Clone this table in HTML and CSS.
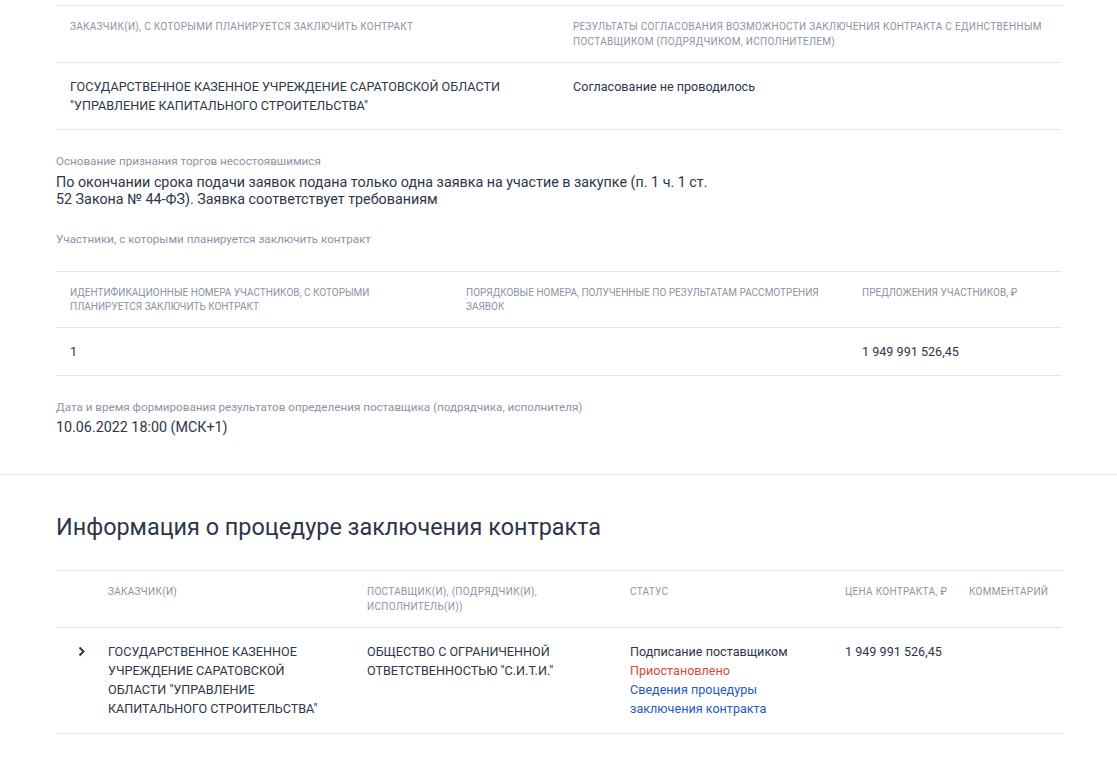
FILE: index.html
```html
<!DOCTYPE html>
<html lang="ru">
  <head>
    <meta charset="UTF-8" />
    <meta name="viewport" content="width=device-width, initial-scale=1.0" />
    <title>Информация о закупке</title>
    <link rel="stylesheet" href="styles.css">
  </head>
  <body>
    <div class="block">
      <div class="table t-two">
        <div class="row head">
          <div class="cell">Заказчик(и), с которыми планируется заключить контракт</div>
          <div class="cell">Результаты согласования возможности заключения контракта с единственным поставщиком (подрядчиком, исполнителем)</div>
        </div>
        <div class="row body">
          <div class="cell">ГОСУДАРСТВЕННОЕ КАЗЕННОЕ УЧРЕЖДЕНИЕ САРАТОВСКОЙ ОБЛАСТИ "УПРАВЛЕНИЕ КАПИТАЛЬНОГО СТРОИТЕЛЬСТВА"</div>
          <div class="cell">Согласование не проводилось</div>
        </div>
      </div>

      <div class="field">
        <div class="label">Основание признания торгов несостоявшимися</div>
        <div class="value wide">По окончании срока подачи заявок подана только одна заявка на участие в закупке (п. 1 ч. 1 ст. 52 Закона № 44-ФЗ). Заявка соответствует требованиям</div>
      </div>

      <div class="field before-table">
        <div class="label">Участники, с которыми планируется заключить контракт</div>
      </div>

      <div class="table t-three">
        <div class="row head">
          <div class="cell">Идентификационные номера участников, с которыми планируется заключить контракт</div>
          <div class="cell">Порядковые номера, полученные по результатам рассмотрения заявок</div>
          <div class="cell">Предложения участников, ₽</div>
        </div>
        <div class="row body">
          <div class="cell">1</div>
          <div class="cell"></div>
          <div class="cell">1 949 991 526,45</div>
        </div>
      </div>

      <div class="field date">
        <div class="label">Дата и время формирования результатов определения поставщика (подрядчика, исполнителя)</div>
        <div class="value">10.06.2022 18:00 (МСК+1)</div>
      </div>
    </div>

    <div class="block second">
      <h2>Информация о процедуре заключения контракта</h2>
      <div class="table t-contract">
        <div class="row head">
          <div class="cell"></div>
          <div class="cell">Заказчик(и)</div>
          <div class="cell">Поставщик(и), (подрядчик(и), исполнитель(и))</div>
          <div class="cell">Статус</div>
          <div class="cell price">Цена контракта, ₽</div>
          <div class="cell">Комментарий</div>
        </div>
        <div class="row body">
          <div class="cell toggle">
            <svg width="8" height="11" viewBox="0 0 8 11"><path d="M1.5 1.5 L5.5 5.5 L1.5 9.5" fill="none" stroke="#2d3648" stroke-width="2"/></svg>
          </div>
          <div class="cell">ГОСУДАРСТВЕННОЕ КАЗЕННОЕ УЧРЕЖДЕНИЕ САРАТОВСКОЙ ОБЛАСТИ "УПРАВЛЕНИЕ КАПИТАЛЬНОГО СТРОИТЕЛЬСТВА"</div>
          <div class="cell">ОБЩЕСТВО С ОГРАНИЧЕННОЙ ОТВЕТСТВЕННОСТЬЮ "С.И.Т.И."</div>
          <div class="cell">
            <div>Подписание поставщиком</div>
            <div class="status-red">Приостановлено</div>
            <a class="link" href="#">Сведения процедуры заключения контракта</a>
          </div>
          <div class="cell price">1 949 991 526,45</div>
          <div class="cell"></div>
        </div>
      </div>
    </div>
  </body>
</html>
```

FILE: styles.css
```css
body {
  font-family: Roboto, "Noto Sans", Arial, sans-serif;
  color: #2d3648;
  background-color: #fff;
  margin: 0;
  padding: 0;
}

.block {
  padding: 5px 55px 0 56px;
}

.block.second {
  border-top: 1px solid #e4e6ea;
  padding-top: 37px;
}

.table {
  border-top: 1px solid #e4e6ea;
}

.row {
  display: grid;
  border-bottom: 1px solid #e4e6ea;
}

.t-two .row {
  grid-template-columns: 503px 1fr;
}

.t-three .row {
  grid-template-columns: 396px 396px 1fr;
}

.t-contract .row {
  grid-template-columns: 38px 259px 263px 215px 124px 1fr;
}

.cell {
  padding: 0 14px;
}

.cell.price {
  white-space: nowrap;
}

.head .cell {
  padding-top: 13px;
  padding-bottom: 13px;
  font-size: 10px;
  line-height: 15px;
  text-transform: uppercase;
  letter-spacing: 0.3px;
  color: #8b93a5;
}

.t-three .head .cell {
  line-height: 14px;
  padding-top: 14px;
  padding-bottom: 13px;
  letter-spacing: 0;
}

.body .cell {
  padding-top: 14px;
  padding-bottom: 14px;
  font-size: 12.6px;
  line-height: 19px;
}

.t-contract .body .cell {
  padding-top: 14px;
  padding-bottom: 15px;
}

.t-contract .toggle {
  padding-left: 22px;
  padding-right: 0;
}

.toggle svg {
  display: block;
  margin-top: 4px;
}

.status-red {
  color: #d9493c;
}

.link {
  color: #1e5ac2;
  text-decoration: none;
}

.field {
  padding-top: 23px;
}

.field.before-table {
  padding-bottom: 24px;
}

.field.date {
  padding-top: 23px;
  padding-bottom: 38px;
}

.label {
  font-size: 11.65px;
  line-height: 16px;
  color: #8b93a5;
}

.value {
  font-size: 14.3px;
  line-height: 17px;
  margin-top: 5px;
}

.field.date .value {
  margin-top: 4px;
}

.value.wide {
  max-width: 670px;
}

h2 {
  margin: 0 0 28px;
  font-size: 23.4px;
  line-height: 30px;
  font-weight: 400;
  color: #2d3648;
}
```
